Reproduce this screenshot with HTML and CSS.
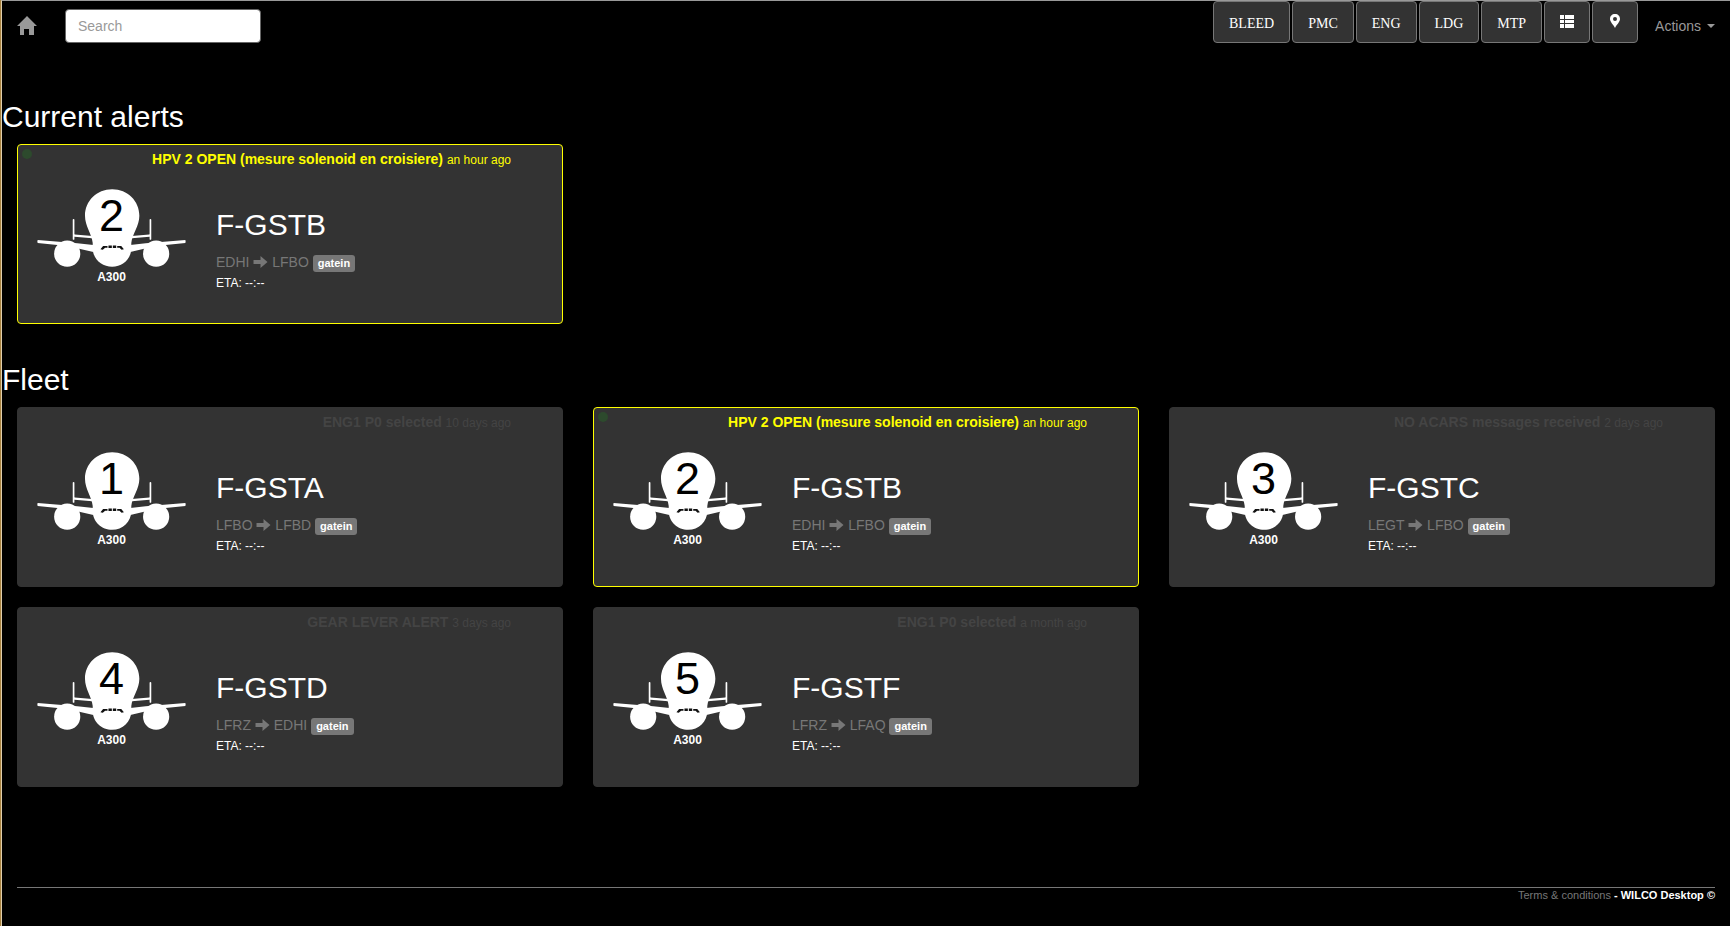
FILE: index.html
```html
<!DOCTYPE html>
<html lang="en">
<head>
<meta charset="utf-8">
<title>WILCO Desktop</title>
<link rel="stylesheet" href="styles.css">
</head>
<body>
<svg class="sprite" aria-hidden="true">
  <symbol id="plane" viewBox="0 0 444 231">
    <g fill="none" stroke="#fff" stroke-linecap="round">
      <path stroke-width="5" d="M109 91V148M338 91V148"/>
      <path stroke-width="7" d="M112 138L182 144M335 138L265 144"/>
    </g>
    <path fill="#fff" d="M2 151Q0 155 2 160L90 169 168 187V166L120 161ZM442 151Q444 155 442 160L354 169 278 187V166L324 161Z"/>
    <circle cx="90" cy="192" r="39" fill="#fff"/>
    <circle cx="355" cy="192" r="39" fill="#fff"/>
    <path fill="#fff" d="M224 0C270 0 305 35 305 79C305 110 284 132 281 160L281 175C281 208 255 231 224 231C193 231 166 208 166 175L166 160C163 132 143 110 143 79C143 35 178 0 224 0Z"/>
    <path fill="#111" d="M189 179L197 169H210V174H203L196 180ZM213 168H223V175H213ZM226 168H236V175H226ZM239 169H251L259 179L252 180 246 174H239Z"/>
  </symbol>
  <symbol id="arrow" viewBox="0 0 14 12">
    <path fill="currentColor" d="M0 4H7V0L14 6 7 12V8H0Z"/>
  </symbol>
</svg>

<header class="navbar">
  <a class="home" href="#" aria-label="Home">
    <svg viewBox="0 0 20 19" width="20" height="19"><path fill="currentColor" d="M10 0L20 10H17V19H12V13H7V19H3V10H0Z"/></svg>
  </a>
  <input class="search" type="search" placeholder="Search" aria-label="Search">
  <nav class="filters">
    <button type="button">BLEED</button>
    <button type="button">PMC</button>
    <button type="button">ENG</button>
    <button type="button">LDG</button>
    <button type="button">MTP</button>
    <button class="icon" type="button" aria-label="List"><svg viewBox="0 0 14 13" width="14" height="13"><path fill="#fff" d="M0 0H4V4H0ZM5 0H14V4H5ZM0 5H4V8H0ZM5 5H14V8H5ZM0 9H4V13H0ZM5 9H14V13H5Z"/></svg></button>
    <button class="icon" type="button" aria-label="Map"><svg viewBox="0 0 14 14" width="14" height="14"><path fill="#fff" fill-rule="evenodd" d="M7 0C10 0 12 2 12 5C12 8 9 10 7 14C5 10 2 8 2 5C2 2 4 0 7 0ZM7 3A2 2 0 1 0 7 7A2 2 0 1 0 7 3Z"/></svg></button>
  </nav>
  <a class="actions" href="#">Actions <span class="caret"></span></a>
</header>

<main>
  <section>
    <h2 class="title">Current alerts</h2>
    <div class="grid">
      <article class="card active">
        <span class="dot"></span>
        <p class="alert"><strong>HPV 2 OPEN (mesure solenoid en croisiere)</strong> <small>an hour ago</small></p>
        <div class="body">
          <div class="craft"><svg class="plane"><use href="#plane"/></svg><span class="number">2</span><span class="model">A300</span></div>
          <div class="info"><h3>F-GSTB</h3><p class="route">EDHI <svg class="arrow"><use href="#arrow"/></svg> LFBO <span class="badge">gatein</span></p><p class="eta">ETA: --:--</p></div>
        </div>
      </article>
    </div>
  </section>

  <section>
    <h2 class="title">Fleet</h2>
    <div class="grid">
      <article class="card">
        <p class="alert"><strong>ENG1 P0 selected</strong> <small>10 days ago</small></p>
        <div class="body">
          <div class="craft"><svg class="plane"><use href="#plane"/></svg><span class="number">1</span><span class="model">A300</span></div>
          <div class="info"><h3>F-GSTA</h3><p class="route">LFBO <svg class="arrow"><use href="#arrow"/></svg> LFBD <span class="badge">gatein</span></p><p class="eta">ETA: --:--</p></div>
        </div>
      </article>
      <article class="card active">
        <span class="dot"></span>
        <p class="alert"><strong>HPV 2 OPEN (mesure solenoid en croisiere)</strong> <small>an hour ago</small></p>
        <div class="body">
          <div class="craft"><svg class="plane"><use href="#plane"/></svg><span class="number">2</span><span class="model">A300</span></div>
          <div class="info"><h3>F-GSTB</h3><p class="route">EDHI <svg class="arrow"><use href="#arrow"/></svg> LFBO <span class="badge">gatein</span></p><p class="eta">ETA: --:--</p></div>
        </div>
      </article>
      <article class="card">
        <p class="alert"><strong>NO ACARS messages received</strong> <small>2 days ago</small></p>
        <div class="body">
          <div class="craft"><svg class="plane"><use href="#plane"/></svg><span class="number">3</span><span class="model">A300</span></div>
          <div class="info"><h3>F-GSTC</h3><p class="route">LEGT <svg class="arrow"><use href="#arrow"/></svg> LFBO <span class="badge">gatein</span></p><p class="eta">ETA: --:--</p></div>
        </div>
      </article>
      <article class="card">
        <p class="alert"><strong>GEAR LEVER ALERT</strong> <small>3 days ago</small></p>
        <div class="body">
          <div class="craft"><svg class="plane"><use href="#plane"/></svg><span class="number">4</span><span class="model">A300</span></div>
          <div class="info"><h3>F-GSTD</h3><p class="route">LFRZ <svg class="arrow"><use href="#arrow"/></svg> EDHI <span class="badge">gatein</span></p><p class="eta">ETA: --:--</p></div>
        </div>
      </article>
      <article class="card">
        <p class="alert"><strong>ENG1 P0 selected</strong> <small>a month ago</small></p>
        <div class="body">
          <div class="craft"><svg class="plane"><use href="#plane"/></svg><span class="number">5</span><span class="model">A300</span></div>
          <div class="info"><h3>F-GSTF</h3><p class="route">LFRZ <svg class="arrow"><use href="#arrow"/></svg> LFAQ <span class="badge">gatein</span></p><p class="eta">ETA: --:--</p></div>
        </div>
      </article>
    </div>
  </section>
</main>

<footer class="footer"><a href="#">Terms &amp; conditions</a> <strong>- WILCO Desktop ©</strong></footer>
</body>
</html>
```

FILE: styles.css
```css
* { box-sizing: border-box; }

html { background: #000; border-left: 1px solid #a8823f; }

body {
  margin: 0;
  min-height: 100vh;
  border-left: 1px solid #e0cfae;
  border-top: 1px solid #999;
  background: #000;
  color: #fff;
  font: 14px/20px "Liberation Sans", Arial, sans-serif;
}

h2, h3, p { margin: 0; font-weight: 400; }
a { text-decoration: none; }
.sprite { position: absolute; width: 0; height: 0; }

/* Top bar */
.navbar {
  display: flex;
  align-items: flex-start;
  height: 50px;
  padding: 0 15px;
}
.home { color: #999; padding-top: 15px; line-height: 0; }
.search {
  width: 196px;
  height: 34px;
  margin: 8px 0 0 28px;
  padding: 6px 12px;
  border: 1px solid #666;
  border-radius: 4px;
  background: #fff;
  font: inherit;
  color: #555;
}
.search::placeholder { color: #999; opacity: 1; }
.filters { display: flex; gap: 2px; margin-left: auto; }
.filters button {
  height: 42px;
  padding: 3px 15px 0;
  border: 1px solid #777;
  border-radius: 4px;
  background: #333;
  color: #fff;
  font: 14px/20px "Liberation Serif", "Times New Roman", serif;
}
.filters .icon { padding: 0 15px 2px; }
.filters svg { display: block; }
.actions {
  display: flex;
  align-items: center;
  gap: 6px;
  padding: 15px 0 15px 17px;
  color: #999;
}
.caret {
  border: 4px solid transparent;
  border-top-color: #999;
  border-bottom: 0;
}

/* Sections and cards */
main { padding-top: 49px; }
section { margin-bottom: 39px; }
.title { font-size: 30px; line-height: 33px; margin-bottom: 11px; }
.grid {
  display: grid;
  grid-template-columns: repeat(3, 1fr);
  gap: 20px 30px;
  padding: 0 15px;
}
.card {
  position: relative;
  min-height: 180px;
  padding: 4px 51px 4px 19px;
  border: 1px solid #333;
  border-radius: 4px;
  background: #333;
}
.card.active { border-color: #ff0; }
.dot {
  position: absolute;
  top: 4px;
  left: 4px;
  width: 10px;
  height: 10px;
  border-radius: 50%;
  background: #2d4a2d;
}
.alert { text-align: right; color: #444; }
.active .alert { color: #ff0; }
small { font-size: 12px; }
.body { display: flex; gap: 30px; padding-top: 19px; }
.craft {
  position: relative;
  display: flex;
  flex-direction: column;
  align-items: center;
  width: 149px;
}
.plane { width: 149px; height: 78px; }
.number {
  position: absolute;
  top: 0;
  left: 0;
  width: 100%;
  color: #000;
  font-size: 45px;
  line-height: 54px;
  text-align: center;
}
.model { font-size: 12px; font-weight: 700; }
.info h3 { font-size: 30px; line-height: 33px; margin: 19px 0 11px; }
.route { margin-bottom: 1px; color: #777; }
.arrow { width: 15px; height: 12px; vertical-align: -1px; }
.badge {
  display: inline-block;
  padding: 3px 5px;
  border-radius: 3px;
  background: #777;
  color: #fff;
  font-size: 11px;
  font-weight: 700;
  line-height: 11px;
  vertical-align: baseline;
}
.eta { font-size: 12px; }

.footer {
  margin: 100px 15px 0;
  border-top: 1px solid #777;
  font-size: 11px;
  line-height: 14px;
  text-align: right;
}
.footer a { color: #777; }
```
